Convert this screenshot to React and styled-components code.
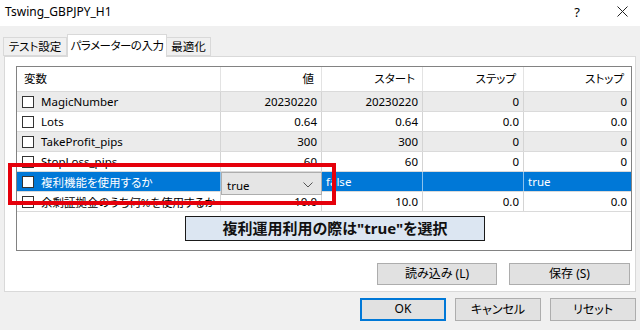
import styled, { createGlobalStyle } from "styled-components";

const GlobalStyle = createGlobalStyle`
  html, body {
    margin: 0;
    padding: 0;
    background: #f0f0f0;
  }
  body {
    font-family: "Segoe UI", "Noto Sans", "Noto Sans CJK JP", sans-serif;
    font-size: 11.5px;
    color: #000;
    font-feature-settings: "palt";
  }
`;

const Window = styled.div`
  position: relative;
  width: 640px;
  height: 330px;
  background: #f0f0f0;
  display: flex;
  flex-direction: column;
  overflow: hidden;
`;

const TitleBar = styled.div`
  height: 26px;
  background: #fff;
  display: flex;
  align-items: center;
  padding: 0 0 0 5px;
  font-size: 12px;
`;

const Title = styled.div`
  flex: 1;
  padding-bottom: 3px;
`;

const TitleButton = styled.div`
  width: ${(p) => p.w}px;
  display: flex;
  justify-content: center;
  align-items: center;
  font-size: 13px;
  padding-bottom: 3px;
`;

const TabStrip = styled.div`
  height: 30px;
  display: flex;
  align-items: flex-end;
  padding-left: 4px;
  position: relative;
  z-index: 2;
`;

const Tab = styled.div`
  width: ${(p) => p.w}px;
  height: ${(p) => (p.active ? 23 : 19)}px;
  margin-bottom: ${(p) => (p.active ? -1 : 0)}px;
  box-sizing: border-box;
  background: ${(p) => (p.active ? "#fff" : "#f0f0f0")};
  border: 1px solid #d9d9d9;
  border-bottom: ${(p) => (p.active ? "none" : "1px solid #d9d9d9")};
  margin-left: ${(p) => (p.active ? 0 : -1)}px;
  display: flex;
  align-items: center;
  justify-content: center;
  font-size: 11.5px;
  white-space: nowrap;
  letter-spacing: ${(p) => (p.active ? "-0.5px" : "0")};
  padding-bottom: ${(p) => (p.active ? 3 : 1)}px;
`;

const Panel = styled.div`
  margin: 0 4px;
  height: 236px;
  box-sizing: border-box;
  background: #fff;
  border: 1px solid #d9d9d9;
  padding: 9px 4px 6px 11px;
  display: flex;
  flex-direction: column;
`;

const ListBox = styled.div`
  width: 616px;
  height: 185px;
  box-sizing: border-box;
  border: 1px solid #828282;
  background: #fff;
  display: flex;
  flex-direction: column;
`;

const Row = styled.div`
  display: grid;
  grid-template-columns: 204px 101px 101px 101px 1fr;
  height: ${(p) => (p.header ? 25 : 20)}px;
  box-sizing: border-box;
  border-bottom: 1px solid #dadada;
  background: ${(p) =>
    p.selected ? "#0078d7" : p.shade ? "#ebebeb" : "#fff"};
  color: ${(p) => (p.selected ? "#fff" : "#000")};
`;

const Cell = styled.div`
  position: relative;
  display: flex;
  align-items: center;
  justify-content: ${(p) => (p.right ? "flex-end" : "flex-start")};
  padding: ${(p) => (p.right ? "0 4px 0 0" : "0 0 0 4px")};
  border-right: ${(p) => (p.last ? "none" : `1px solid ${p.line || "#d4d4d4"}`)};
  white-space: nowrap;
  overflow: visible;
`;

const HeadCell = styled(Cell)`
  padding: ${(p) => (p.right ? "0 7px 0 0" : "0 0 0 7px")};
  padding-bottom: 2px;
`;

const NameCell = styled(Cell)`
  padding-left: 5px;
  gap: 7px;
`;

const CheckBox = styled.span`
  width: 12px;
  height: 12px;
  box-sizing: border-box;
  border: 1px solid #333;
  background: #fff;
  flex-shrink: 0;
`;

const Combo = styled.div`
  position: absolute;
  left: 0;
  top: 0;
  width: 101px;
  height: 23px;
  box-sizing: border-box;
  background: #e5e5e5;
  border: 1px solid #adadad;
  color: #000;
  display: flex;
  align-items: center;
  justify-content: space-between;
  padding: 3px 8px 0 5px;
  z-index: 3;
`;

const ButtonRow = styled.div`
  margin-top: 12px;
  display: flex;
  justify-content: flex-end;
  gap: ${(p) => p.gap}px;
  padding-right: ${(p) => p.pr}px;
`;

const Button = styled.button`
  width: ${(p) => p.w}px;
  height: ${(p) => p.h}px;
  box-sizing: border-box;
  background: #e1e1e1;
  border: ${(p) => (p.primary ? "2px solid #0078d7" : "1px solid #adadad")};
  font: inherit;
  font-size: 12px;
  color: #000;
  padding: 0 0 2px;
  display: flex;
  align-items: center;
  justify-content: center;
`;

const Footer = styled(ButtonRow)`
  margin-top: 6px;
`;

const RedFrame = styled.div`
  position: absolute;
  left: 8px;
  top: 163px;
  width: 328px;
  height: 42px;
  box-sizing: border-box;
  border: 4px solid #e5000b;
  z-index: 10;
`;

const Note = styled.div`
  position: absolute;
  left: 185px;
  top: 216px;
  width: 300px;
  height: 25px;
  box-sizing: border-box;
  background: #dce6f2;
  border: 1px solid #1a1a1a;
  display: flex;
  align-items: center;
  justify-content: center;
  font-weight: bold;
  font-size: 15px;
  color: #111;
  padding-bottom: 2px;
  z-index: 10;
`;

const rows = [
  { name: "MagicNumber", v: "20230220", s: "20230220", st: "0", sp: "0", shade: true },
  { name: "Lots", v: "0.64", s: "0.64", st: "0.0", sp: "0.0" },
  { name: "TakeProfit_pips", v: "300", s: "300", st: "0", sp: "0", shade: true },
  { name: "StopLoss_pips", v: "60", s: "60", st: "0", sp: "0" },
  { name: "複利機能を使用するか", selected: true },
  { name: "余剰証拠金のうち何%を使用するか", v: "10.0", s: "10.0", st: "0.0", sp: "0.0" },
];

const Chevron = () => (
  <svg width="10" height="6" viewBox="0 0 10 6">
    <polyline points="0.5,0.5 5,5 9.5,0.5" fill="none" stroke="#555" strokeWidth="1" />
  </svg>
);

const CloseIcon = () => (
  <svg width="11" height="11" viewBox="0 0 11 11">
    <path d="M0.5 0.5 L10.5 10.5 M10.5 0.5 L0.5 10.5" stroke="#222" strokeWidth="1" />
  </svg>
);

const ParamRow = ({ r }) => {
  if (r.selected) {
    const line = "rgba(255,255,255,0.55)";
    return (
      <Row selected>
        <NameCell line={line}>
          <CheckBox />
          {r.name}
        </NameCell>
        <Cell line={line}>
          <Combo>
            <span>true</span>
            <Chevron />
          </Combo>
        </Cell>
        <Cell line={line}>false</Cell>
        <Cell line={line} />
        <Cell last>true</Cell>
      </Row>
    );
  }
  return (
    <Row shade={r.shade}>
      <NameCell>
        <CheckBox />
        {r.name}
      </NameCell>
      <Cell right>{r.v}</Cell>
      <Cell right>{r.s}</Cell>
      <Cell right>{r.st}</Cell>
      <Cell right last>{r.sp}</Cell>
    </Row>
  );
};

const App = () => {
  return (
    <Window>
      <GlobalStyle />
      <TitleBar>
        <Title>Tswing_GBPJPY_H1</Title>
        <TitleButton w={54}>?</TitleButton>
        <TitleButton w={36}>
          <CloseIcon />
        </TitleButton>
      </TitleBar>

      <TabStrip>
        <Tab w={64}>テスト設定</Tab>
        <Tab w={100} active>パラメーターの入力</Tab>
        <Tab w={45}>最適化</Tab>
      </TabStrip>

      <Panel>
        <ListBox>
          <Row header>
            <HeadCell line="#e3e3e3">変数</HeadCell>
            <HeadCell right line="#e3e3e3">値</HeadCell>
            <HeadCell right line="#e3e3e3">スタート</HeadCell>
            <HeadCell right line="#e3e3e3">ステップ</HeadCell>
            <HeadCell right last>ストップ</HeadCell>
          </Row>
          {rows.map((r) => (
            <ParamRow key={r.name} r={r} />
          ))}
        </ListBox>
        <ButtonRow gap={12} pr={1}>
          <Button w={120} h={22}>読み込み (L)</Button>
          <Button w={121} h={22}>保存 (S)</Button>
        </ButtonRow>
      </Panel>

      <Footer gap={9} pr={4}>
        <Button w={86} h={23} primary>OK</Button>
        <Button w={86} h={23}>キャンセル</Button>
        <Button w={86} h={23}>リセット</Button>
      </Footer>

      <RedFrame />
      <Note>複利運用利用の際は"true"を選択</Note>
    </Window>
  );
};

export default App;
